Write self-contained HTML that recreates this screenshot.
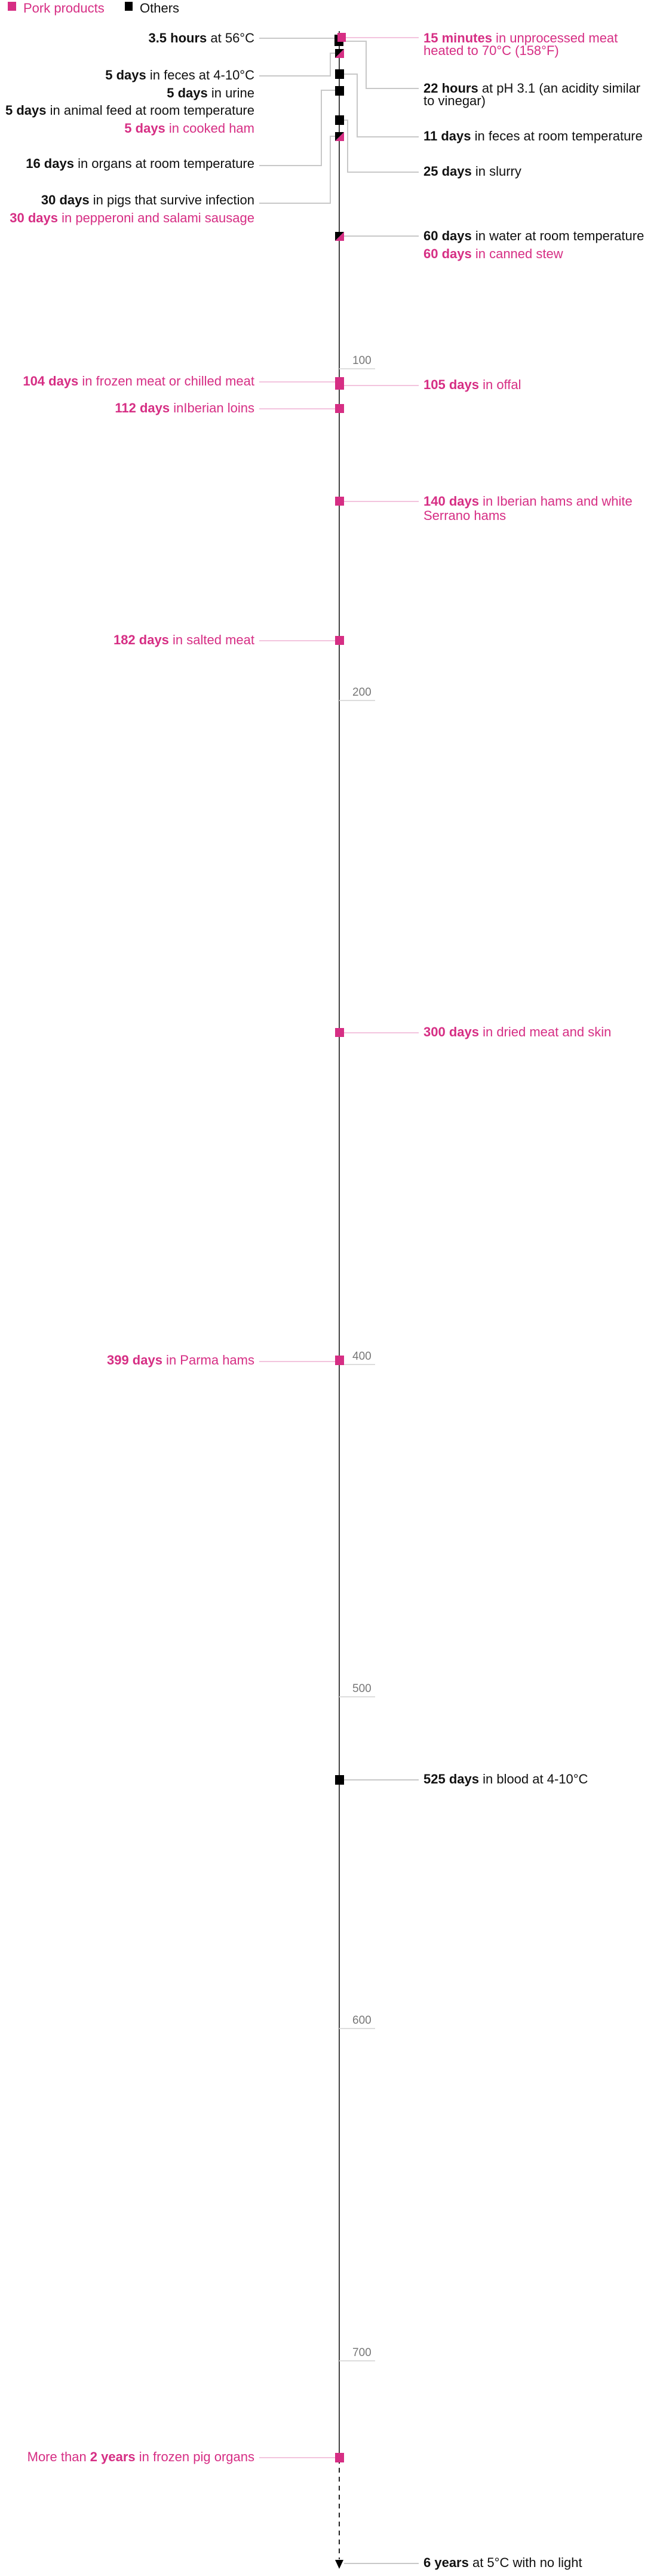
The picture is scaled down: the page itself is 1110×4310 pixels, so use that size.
<!DOCTYPE html>
<html><head><meta charset="utf-8"><style>
html,body{margin:0;padding:0;background:#fff;}
body{width:1110px;height:4310px;position:relative;overflow:hidden;font-family:"Liberation Sans",Arial,sans-serif;}
.t{position:absolute;font-size:22px;line-height:22px;color:#111;white-space:nowrap;}
.l{right:684px;text-align:right;}
.r{left:709px;}
.p{color:#d62e84;}
b{font-weight:bold;}
.tk{position:absolute;left:590px;font-size:19px;color:#777;line-height:19px;}
svg{position:absolute;left:0;top:0;}
</style></head><body>
<svg width="1110" height="4310" viewBox="0 0 1110 4310">
<rect x="13" y="3" width="14" height="15" fill="#d62e84"/>
<rect x="209" y="3" width="13" height="15" fill="#000"/>
<line x1="568" y1="52" x2="568" y2="4114" stroke="#444" stroke-width="2"/>
<line x1="568" y1="4114" x2="568" y2="4282" stroke="#222" stroke-width="2" stroke-dasharray="8,7"/>
<polygon points="561,4283 575,4283 568,4298" fill="#000"/>
<g stroke="#ddd" stroke-width="2">
<line x1="568" y1="617" x2="628" y2="617"/>
<line x1="568" y1="1172" x2="628" y2="1172"/>
<line x1="568" y1="2283" x2="628" y2="2283"/>
<line x1="568" y1="2839" x2="628" y2="2839"/>
<line x1="568" y1="3394" x2="628" y2="3394"/>
<line x1="568" y1="3950" x2="628" y2="3950"/>
</g>
<g stroke="#c8c8c8" stroke-width="2" fill="none">
<polyline points="434,64 560,64"/>
<polyline points="579,69 613,69 613,148 701,148"/>
<polyline points="434,127 553,127 553,89 561,89"/>
<polyline points="576,124 598,124 598,229 701,229"/>
<polyline points="434,277 538,277 538,151 561,151"/>
<polyline points="576,201 582,201 582,288 701,288"/>
<polyline points="434,340 553,340 553,228 561,228"/>
<polyline points="576,395 701,395"/>
<polyline points="576,2978 701,2978"/>
<polyline points="576,4289 701,4289"/>
</g>
<g stroke="#f3c4de" stroke-width="2" fill="none">
<polyline points="579,63 701,63"/>
<polyline points="434,639 561,639"/>
<polyline points="576,645 701,645"/>
<polyline points="434,684 561,684"/>
<polyline points="576,839 701,839"/>
<polyline points="434,1072 561,1072"/>
<polyline points="576,1728 701,1728"/>
<polyline points="434,2278 561,2278"/>
<polyline points="434,4112 561,4112"/>
</g>
<rect x="560" y="58" width="15" height="19" fill="#000"/>
<rect x="565" y="55" width="14" height="15" fill="#d62e84"/>
<g>
<polygon points="561,82 576,82 561,97" fill="#000"/><polygon points="576,82 576,97 561,97" fill="#d62e84"/>
<polygon points="561,221 576,221 561,236" fill="#000"/><polygon points="576,221 576,236 561,236" fill="#d62e84"/>
<polygon points="561,388 576,388 561,403" fill="#000"/><polygon points="576,388 576,403 561,403" fill="#d62e84"/>
</g>
<rect x="561" y="116" width="15" height="16" fill="#000"/>
<rect x="561" y="144" width="15" height="16" fill="#000"/>
<rect x="561" y="193" width="15" height="16" fill="#000"/>
<rect x="561" y="2970" width="15" height="16" fill="#000"/>
<g fill="#d62e84">
<rect x="561" y="631" width="15" height="21"/>
<rect x="561" y="676" width="15" height="15"/>
<rect x="561" y="831" width="15" height="15"/>
<rect x="561" y="1064" width="15" height="15"/>
<rect x="561" y="1720" width="15" height="15"/>
<rect x="561" y="2268" width="15" height="16"/>
<rect x="561" y="4104" width="15" height="16"/>
</g>
</svg>

<div class="t p" style="left:39px;top:3px;">Pork products</div>
<div class="t" style="left:234px;top:3px;">Others</div>

<div class="t l" style="top:53px;"><b>3.5 hours</b> at 56°C</div>
<div class="t l" style="top:115px;"><b>5 days</b> in feces at 4-10°C</div>
<div class="t l" style="top:145px;"><b>5 days</b> in urine</div>
<div class="t l" style="top:174px;"><b>5 days</b> in animal feed at room temperature</div>
<div class="t l p" style="top:204px;"><b>5 days</b> in cooked ham</div>
<div class="t l" style="top:263px;"><b>16 days</b> in organs at room temperature</div>
<div class="t l" style="top:324px;"><b>30 days</b> in pigs that survive infection</div>
<div class="t l p" style="top:354px;"><b>30 days</b> in pepperoni and salami sausage</div>

<div class="t r p" style="top:53px;line-height:21px;"><b>15 minutes</b> in unprocessed meat<br>heated to 70°C (158°F)</div>
<div class="t r" style="top:137px;line-height:21px;"><b>22 hours</b> at pH 3.1 (an acidity similar<br>to vinegar)</div>
<div class="t r" style="top:217px;"><b>11 days</b> in feces at room temperature</div>
<div class="t r" style="top:276px;"><b>25 days</b> in slurry</div>
<div class="t r" style="top:384px;"><b>60 days</b> in water at room temperature</div>
<div class="t r p" style="top:414px;"><b>60 days</b> in canned stew</div>

<div class="tk" style="top:594px;">100</div>
<div class="t l p" style="top:627px;"><b>104 days</b> in frozen meat or chilled meat</div>
<div class="t r p" style="top:633px;"><b>105 days</b> in offal</div>
<div class="t l p" style="top:672px;"><b>112 days</b> inIberian loins</div>
<div class="t r p" style="top:827px;line-height:24px;"><b>140 days</b> in Iberian hams and white<br>Serrano hams</div>
<div class="t l p" style="top:1060px;"><b>182 days</b> in salted meat</div>
<div class="tk" style="top:1149px;">200</div>
<div class="t r p" style="top:1716px;"><b>300 days</b> in dried meat and skin</div>
<div class="t l p" style="top:2265px;"><b>399 days</b> in Parma hams</div>
<div class="tk" style="top:2260px;">400</div>
<div class="tk" style="top:2816px;">500</div>
<div class="t r" style="top:2966px;"><b>525 days</b> in blood at 4-10°C</div>
<div class="tk" style="top:3371px;">600</div>
<div class="tk" style="top:3927px;">700</div>
<div class="t l p" style="top:4100px;">More than <b>2 years</b> in frozen pig organs</div>
<div class="t r" style="top:4277px;"><b>6 years</b> at 5°C with no light</div>
</body></html>
